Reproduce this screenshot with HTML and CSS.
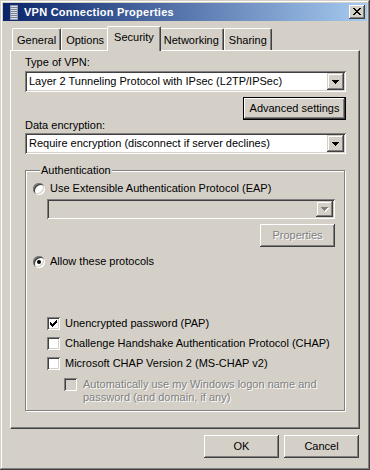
FILE: index.html
```html
<!DOCTYPE html>
<html>
<head>
<meta charset="utf-8">
<title>VPN Connection Properties</title>
<link rel="stylesheet" href="styles.css">
</head>
<body>
<div class="window">
  <div class="titlebar">
    <svg class="title-icon" width="16" height="16" viewBox="0 0 16 16" shape-rendering="crispEdges">
      <rect x="5" y="1" width="8" height="15" fill="#8c96a8"/>
      <rect x="6" y="2" width="6" height="13" fill="#d8dde6"/>
      <rect x="6" y="3" width="6" height="1" fill="#7a8494"/>
      <rect x="6" y="5" width="6" height="1" fill="#7a8494"/>
      <rect x="6" y="7" width="6" height="1" fill="#7a8494"/>
      <rect x="6" y="9" width="6" height="1" fill="#7a8494"/>
      <rect x="6" y="11" width="6" height="1" fill="#7a8494"/>
      <rect x="6" y="13" width="6" height="1" fill="#7a8494"/>
    </svg>
    <span class="title-text">VPN Connection Properties</span>
    <span class="close-btn">
      <svg width="8" height="7" viewBox="0 0 8 7" shape-rendering="crispEdges"><path fill="#000" d="M0 0h2v1H0zM6 0h2v1H6zM1 1h2v1H1zM5 1h2v1H5zM2 2h4v1H2zM3 3h2v1H3zM2 4h4v1H2zM1 5h2v1H1zM5 5h2v1H5zM0 6h2v1H0zM6 6h2v1H6z"/></svg>
    </span>
  </div>

  <div class="dialog">
    <div class="tabs">
      <div class="tab">General</div>
      <div class="tab">Options</div>
      <div class="tab tab-active">Security</div>
      <div class="tab">Networking</div>
      <div class="tab">Sharing</div>
    </div>

    <div class="panel">
      <div class="label">Type of VPN:</div>
      <div class="combo combo-first">
        <span class="combo-value">Layer 2 Tunneling Protocol with IPsec (L2TP/IPSec)</span>
        <span class="combo-btn"><svg width="7" height="4" viewBox="0 0 7 4" shape-rendering="crispEdges"><path fill="#000" d="M0 0h7v1H0zM1 1h5v1H1zM2 2h3v1H2zM3 3h1v1H3z"/></svg></span>
      </div>
      <div class="btn-row btn-row-adv">
        <span class="btn btn-default btn-adv">Advanced settings</span>
      </div>
      <div class="label label-enc">Data encryption:</div>
      <div class="combo combo-second">
        <span class="combo-value">Require encryption (disconnect if server declines)</span>
        <span class="combo-btn"><svg width="7" height="4" viewBox="0 0 7 4" shape-rendering="crispEdges"><path fill="#000" d="M0 0h7v1H0zM1 1h5v1H1zM2 2h3v1H2zM3 3h1v1H3z"/></svg></span>
      </div>

      <div class="group">
        <div class="group-title">Authentication</div>
        <div class="opt opt-eap"><span class="radio"></span><span>Use Extensible Authentication Protocol (EAP)</span></div>
        <div class="sub">
          <div class="combo combo-disabled">
            <span class="combo-value"></span>
            <span class="combo-btn"><svg width="8" height="5" viewBox="0 0 8 5" shape-rendering="crispEdges"><path fill="#fff" d="M1 1h7v1H1zM2 2h5v1H2zM3 3h3v1H3zM4 4h1v1H4z"/><path fill="#808080" d="M0 0h7v1H0zM1 1h5v1H1zM2 2h3v1H2zM3 3h1v1H3z"/></svg></span>
          </div>
          <div class="btn-row btn-row-props">
            <span class="btn btn-disabled">Properties</span>
          </div>
        </div>
        <div class="opt opt-allow"><span class="radio radio-on"></span><span>Allow these protocols</span></div>
        <div class="checks">
          <div class="opt"><span class="check"><svg width="7" height="7" viewBox="0 0 7 7" shape-rendering="crispEdges"><path fill="#000" d="M6 0h1v1H6zM5 1h2v1H5zM0 2h1v1H0zM4 2h3v1H4zM0 3h2v1H0zM3 3h3v1H3zM0 4h5v1H0zM1 5h3v1H1zM2 6h1v1H2z"/></svg></span><span>Unencrypted password (PAP)</span></div>
          <div class="opt"><span class="check"></span><span>Challenge Handshake Authentication Protocol (CHAP)</span></div>
          <div class="opt"><span class="check"></span><span>Microsoft CHAP Version 2 (MS-CHAP v2)</span></div>
          <div class="opt opt-multi"><span class="check check-disabled"></span><span class="text-disabled">Automatically use my Windows logon name and<br>password (and domain, if any)</span></div>
        </div>
      </div>
    </div>

    <div class="footer">
      <span class="btn">OK</span>
      <span class="btn">Cancel</span>
    </div>
  </div>
</div>
</body>
</html>
```

FILE: styles.css
```css
* { box-sizing: border-box; }
html, body { margin: 0; padding: 0; }
body {
  background: #d4d0c8;
  font-family: "Liberation Sans", Arial, sans-serif;
  font-size: 11px;
  line-height: 13px;
  color: #000;
}

.window {
  width: 370px;
  height: 470px;
  padding: 3px;
  background: #d4d0c8;
  box-shadow: inset -1px -1px #404040, inset 1px 1px #d4d0c8, inset -2px -2px #808080, inset 2px 2px #fff;
  display: flex;
  flex-direction: column;
}

.titlebar {
  height: 18px;
  background: linear-gradient(to right, #0a246a, #a6caf0);
  display: flex;
  align-items: center;
  padding: 0 2px 0 2px;
  color: #fff;
}
.title-icon { display: block; flex: none; }
.title-text {
  flex: 1;
  margin-left: 3px;
  font-weight: bold;
  letter-spacing: 0.25px;
  white-space: nowrap;
}
.close-btn {
  width: 16px;
  height: 14px;
  background: #d4d0c8;
  box-shadow: inset -1px -1px #404040, inset 1px 1px #fff, inset -2px -2px #808080, inset 2px 2px #d4d0c8;
  display: flex;
  align-items: center;
  justify-content: center;
  padding: 0 1px 1px 0;
}
.close-btn svg { display: block; }

.dialog {
  flex: 1;
  display: flex;
  flex-direction: column;
  padding: 5px 7px 0;
}

.tabs {
  display: flex;
  align-items: flex-end;
  height: 24px;
  padding-left: 2px;
}
.tab {
  height: 22px;
  padding: 2px 4px 0;
  border-top: 1px solid #fff;
  border-left: 1px solid #fff;
  border-right: 1px solid #404040;
  border-radius: 2px 2px 0 0;
  box-shadow: inset -1px 0 #808080;
  display: flex;
  align-items: center;
  white-space: nowrap;
  background: #d4d0c8;
}
.tab-active {
  height: 25px;
  margin: 0 -2px -1px;
  padding: 0 6px 3px;
  position: relative;
  z-index: 1;
}

.panel {
  height: 379px;
  border: 1px solid;
  border-color: #fff #404040 #404040 #fff;
  box-shadow: inset -1px -1px #808080;
  padding: 5px 13px 0 14px;
}

.label { height: 13px; white-space: nowrap; }
.label-enc { margin-top: -1px; }

.combo {
  height: 21px;
  background: #fff;
  display: flex;
  align-items: center;
  padding: 2px;
  box-shadow: inset 1px 1px #808080, inset -1px -1px #fff, inset 2px 2px #404040, inset -2px -2px #d4d0c8;
}
.combo-first { margin-top: 2px; }
.combo-second { margin-top: 1px; }
.combo-value {
  flex: 1;
  padding-left: 2px;
  white-space: nowrap;
  overflow: hidden;
}
.combo-btn {
  width: 17px;
  height: 17px;
  flex: none;
  background: #d4d0c8;
  box-shadow: inset -1px -1px #404040, inset 1px 1px #d4d0c8, inset -2px -2px #808080, inset 2px 2px #fff;
  display: flex;
  align-items: center;
  justify-content: center;
}
.combo-btn svg { display: block; }
.combo-disabled { background: #d4d0c8; margin-top: 4px; height: 20px; }
.combo-disabled .combo-btn { height: 16px; }

.btn-row { display: flex; justify-content: flex-end; }
.btn-row-adv { margin-top: 5px; }
.btn-row-props { margin-top: 5px; }

.btn {
  width: 75px;
  height: 23px;
  display: flex;
  align-items: center;
  justify-content: center;
  background: #d4d0c8;
  white-space: nowrap;
  box-shadow: inset -1px -1px #404040, inset 1px 1px #fff, inset -2px -2px #808080, inset 2px 2px #d4d0c8;
}
.btn-adv { width: 103px; }
.btn-default {
  box-shadow: inset 0 0 0 1px #000, inset -2px -2px #404040, inset 2px 2px #fff, inset -3px -3px #808080;
}
.btn-disabled, .text-disabled {
  color: #808080;
  text-shadow: 1px 1px 0 #fff;
}

.group {
  margin-top: 16px;
  margin-right: 1px;
  border: 1px solid #808080;
  box-shadow: inset 1px 1px #fff, 1px 1px 0 #fff;
  padding: 0 9px 6px 7px;
}
.group-title {
  margin: -7px 0 0 7px;
  padding: 0 1px;
  width: max-content;
  background: #d4d0c8;
}

.opt {
  display: flex;
  align-items: center;
  gap: 5px;
  min-height: 13px;
  white-space: nowrap;
}
.opt-eap { margin-top: 5px; }
.opt-allow { margin-top: 8px; }
.sub { margin-left: 14px; }

.radio {
  width: 12px;
  height: 12px;
  flex: none;
  border-radius: 50%;
  background: #fff;
  box-shadow: inset 1px 1px #808080, inset -1px -1px #fff, inset 2px 2px #404040, inset -2px -2px #d4d0c8;
  display: flex;
  align-items: center;
  justify-content: center;
}
.radio-on::after {
  content: "";
  width: 4px;
  height: 4px;
  border-radius: 50%;
  background: #000;
}

.checks {
  margin-top: 49px;
  margin-left: 14px;
  display: flex;
  flex-direction: column;
  gap: 7px;
}
.check {
  width: 13px;
  height: 13px;
  flex: none;
  background: #fff;
  box-shadow: inset 1px 1px #808080, inset -1px -1px #fff, inset 2px 2px #404040, inset -2px -2px #d4d0c8;
  display: flex;
  align-items: center;
  justify-content: center;
}
.check svg { display: block; }
.check-disabled { background: #d4d0c8; }
.opt-multi {
  align-items: flex-start;
  margin-left: 17px;
  gap: 6px;
  margin-top: 1px;
}

.footer {
  display: flex;
  justify-content: flex-end;
  gap: 5px;
  margin-top: 6px;
  padding-right: 1px;
}
```
